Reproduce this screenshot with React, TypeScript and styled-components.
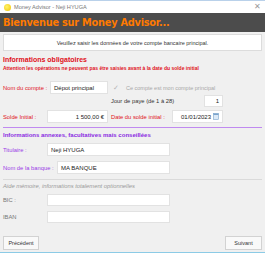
import { FC } from 'react'
import styled, { createGlobalStyle } from 'styled-components'

const GlobalStyle = createGlobalStyle`
  html, body {
    margin: 0;
    padding: 0;
    background: #f0f0f0;
  }
  body {
    font-family: 'Liberation Sans', Arial, sans-serif;
  }
`

const Window = styled.div`
  width: 265px;
  height: 253px;
  box-sizing: border-box;
  background: #f0f0f0;
  border-top: 1px solid #b9d1ea;
  border-bottom: 1px solid #8ccbe6;
  display: flex;
  flex-direction: column;
  overflow: hidden;
`

const TitleBar = styled.div`
  height: 12px;
  background: #ffffff;
  display: flex;
  align-items: center;
  padding: 0 4px 0 4px;
  gap: 3px;
`

const AppIcon = styled.span`
  width: 7px;
  height: 7px;
  border-radius: 50%;
  background: radial-gradient(circle at 40% 40%, #fff36a, #f2c400);
`

const TitleText = styled.span`
  flex: 1;
  font-size: 5.6px;
  color: #777;
`

const CloseIcon = styled.span`
  font-size: 8px;
  color: #999;
  line-height: 1;
`

const Header = styled.div`
  height: 19px;
  background: #4c4c4c;
  display: flex;
  align-items: center;
  padding-left: 3px;
  font-family: 'DejaVu Sans', Verdana, sans-serif;
  font-weight: bold;
  font-size: 9.8px;
  color: #ff7a00;
  letter-spacing: -0.25px;
`

const Content = styled.div`
  flex: 1;
  display: flex;
  flex-direction: column;
  padding: 0 3px;
`

const Notice = styled.div`
  margin-top: 2px;
  height: 15px;
  background: #ffffff;
  border: 1px solid #dcdcdc;
  display: flex;
  align-items: center;
  justify-content: center;
  font-size: 5.5px;
  color: #333;
`

const SectionTitle = styled.div<{ $color: string; $top: number; $size: number }>`
  margin-top: ${(p) => p.$top}px;
  height: 9px;
  line-height: 9px;
  font-size: ${(p) => p.$size}px;
  font-weight: bold;
  color: ${(p) => p.$color};
  white-space: nowrap;
`

const Warning = styled.div`
  height: 8px;
  line-height: 8px;
  font-size: 5px;
  font-weight: bold;
  color: #e0101a;
`

const Row = styled.div<{ $top: number; $h?: number; $indent?: number }>`
  margin-top: ${(p) => p.$top}px;
  height: ${(p) => p.$h ?? 13}px;
  display: flex;
  align-items: center;
  padding-left: ${(p) => p.$indent ?? 0}px;
`

const Label = styled.span<{ $w: number; $color?: string; $pad?: number }>`
  width: ${(p) => p.$w}px;
  padding-left: ${(p) => p.$pad ?? 0}px;
  flex: none;
  font-size: 5.8px;
  color: ${(p) => p.$color ?? '#777'};
  white-space: nowrap;
`

const Input = styled.div<{ $w: number; $align?: string }>`
  width: ${(p) => p.$w}px;
  flex: none;
  height: 100%;
  box-sizing: border-box;
  background: #ffffff;
  border: 1px solid #e2e2e2;
  display: flex;
  align-items: center;
  justify-content: ${(p) => (p.$align === 'right' ? 'flex-end' : 'flex-start')};
  padding: 0 3px;
  font-size: 6px;
  color: #222;
  gap: 2px;
`

const Check = styled.span`
  margin-left: 5px;
  font-size: 7px;
  color: #b5b5b5;
  width: 13px;
`

const Muted = styled.span`
  font-size: 5.5px;
  color: #a8a8a8;
  white-space: nowrap;
`

const Plain = styled.span<{ $w: number }>`
  width: ${(p) => p.$w}px;
  flex: none;
  font-size: 5.8px;
  color: #333;
  white-space: nowrap;
`

const Divider = styled.div<{ $color: string; $top: number }>`
  margin-top: ${(p) => p.$top}px;
  height: 1px;
  background: ${(p) => p.$color};
`

const Hint = styled.div`
  height: 8px;
  line-height: 8px;
  margin-top: 2px;
  font-size: 5.8px;
  font-style: italic;
  color: #9a9a9a;
`

const Footer = styled.div`
  margin-top: auto;
  margin-bottom: 2px;
  display: flex;
  justify-content: space-between;
`

const Button = styled.button<{ $w: number }>`
  width: ${(p) => p.$w}px;
  height: 14px;
  padding: 0;
  background: #f9f9f9;
  border: 1px solid #d2d2d2;
  font-family: inherit;
  font-size: 5.5px;
  color: #333;
  cursor: pointer;
`

const CalendarIcon: FC = () => (
  <svg width='6' height='7' viewBox='0 0 6 7'>
    <rect x='0.5' y='0.5' width='5' height='6' fill='#dbe9f7' stroke='#7aa3cc' strokeWidth='0.6' />
    <rect x='0.5' y='0.5' width='5' height='1.5' fill='#7aa3cc' />
  </svg>
)

const App: FC = () => {
  return (
    <>
      <GlobalStyle />
      <Window>
        <TitleBar>
          <AppIcon />
          <TitleText>Money Advisor - Neji HYUGA</TitleText>
          <CloseIcon>✕</CloseIcon>
        </TitleBar>
        <Header>Bienvenue sur Money Advisor...</Header>
        <Content>
          <Notice>Veuillez saisir les données de votre compte bancaire principal.</Notice>

          <SectionTitle $color='#e0101a' $top={4} $size={7}>Informations obligatoires</SectionTitle>
          <Warning>Attention les opérations ne peuvent pas être saisies avant à la date du solde initial</Warning>

          <Row $top={9}>
            <Label $w={47} $color='#e0101a'>Nom du compte :</Label>
            <Input $w={58}>Dépot principal</Input>
            <Check>✓</Check>
            <Muted>Ce compte est mon compte principal</Muted>
          </Row>
          <Row $top={1} $h={12} $indent={108}>
            <Plain $w={93}>Jour de paye (de 1 à 28)</Plain>
            <Input $w={19} $align='right'>1</Input>
          </Row>
          <Row $top={3}>
            <Label $w={44} $color='#e0101a'>Solde Initial :</Label>
            <Input $w={61} $align='right'>1 500,00 €</Input>
            <Label $w={61} $pad={3} $color='#e0101a'>Date du solde initial :</Label>
            <Input $w={51} $align='right'>
              01/01/2023 <CalendarIcon />
            </Input>
          </Row>

          <Divider $color='#c08af0' $top={4} />
          <SectionTitle $color='#8a2be2' $top={3} $size={6}>
            Informations annexes, facultatives mais conseillées
          </SectionTitle>
          <Row $top={3}>
            <Label $w={44} $color='#9a3be6'>Titulaire :</Label>
            <Input $w={123}>Neji HYUGA</Input>
          </Row>
          <Row $top={5}>
            <Label $w={54} $color='#9a3be6'>Nom de la banque :</Label>
            <Input $w={113}>MA BANQUE</Input>
          </Row>

          <Divider $color='#dadada' $top={5} />
          <Hint>Aide mémoire, informations totalement optionnelles</Hint>
          <Row $top={4} $h={12}>
            <Label $w={44}>BIC :</Label>
            <Input $w={123} />
          </Row>
          <Row $top={5} $h={12}>
            <Label $w={44}>IBAN</Label>
            <Input $w={123} />
          </Row>

          <Footer>
            <Button $w={36}>Précédent</Button>
            <Button $w={37}>Suivant</Button>
          </Footer>
        </Content>
      </Window>
    </>
  )
}

export default App
